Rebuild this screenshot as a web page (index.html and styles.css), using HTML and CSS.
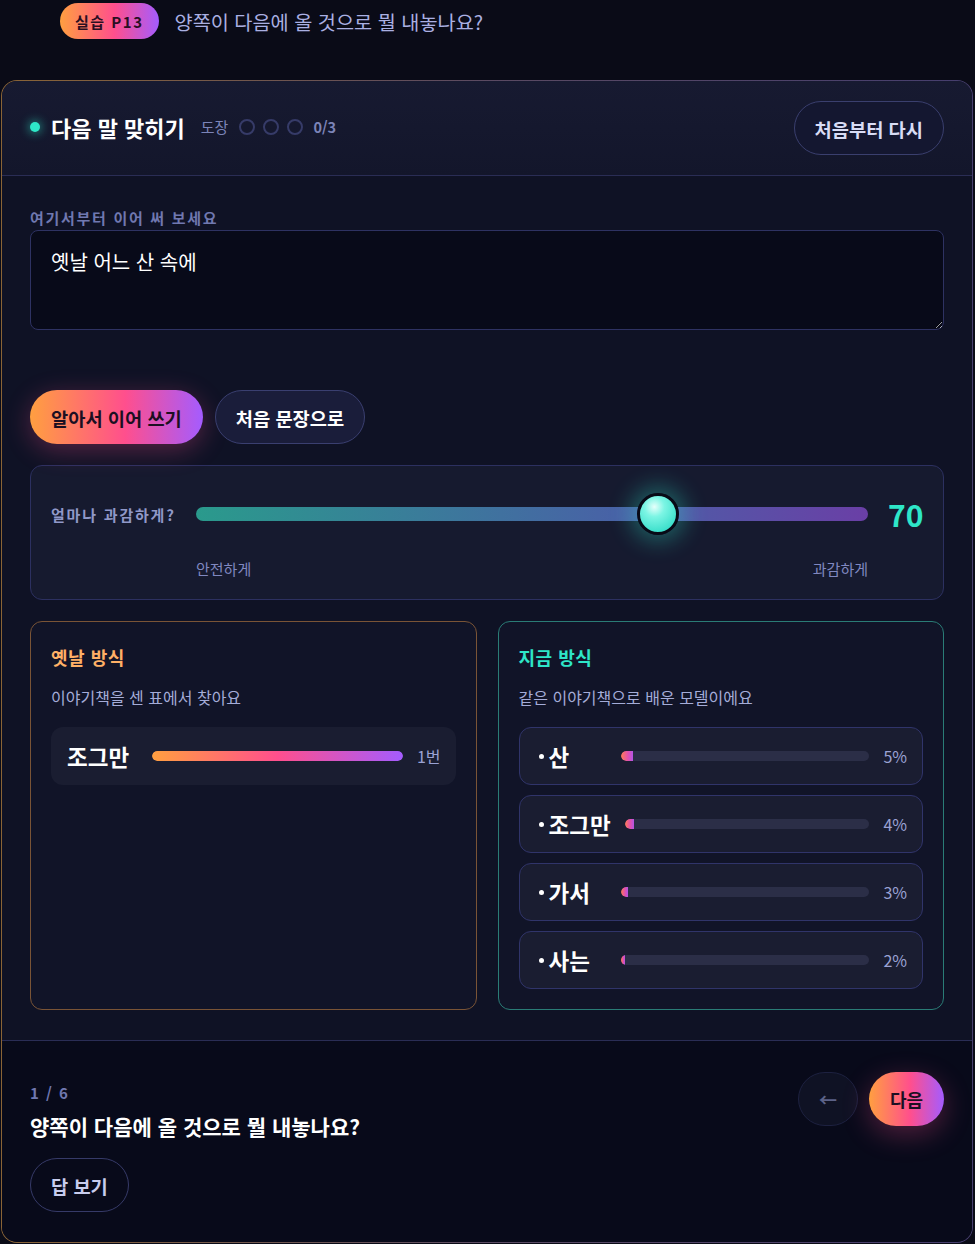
FILE: index.html
```html
<!DOCTYPE html>
<html lang="ko">
<head>
    <meta charset="UTF-8">
    <meta name="viewport" content="width=device-width, initial-scale=1.0">
    <title>다음 말 맞히기</title>
    <link rel="stylesheet" href="styles.css">
</head>
<body>
    <div class="topbar">
        <span class="tag">실습 P13</span>
        <span class="topbar-title">양쪽이 다음에 올 것으로 뭘 내놓나요?</span>
    </div>

    <div class="card">
        <div class="card-header">
            <div class="title-group">
                <span class="live-dot"></span>
                <h1>다음 말 맞히기</h1>
                <span class="stamp-label">도장</span>
                <span class="stamps"><i></i><i></i><i></i></span>
                <span class="stamp-count">0/3</span>
            </div>
            <button class="btn btn-outline">처음부터 다시</button>
        </div>

        <div class="card-body">
            <label class="field-label" for="prompt">여기서부터 이어 써 보세요</label>
            <textarea id="prompt" class="prompt">옛날 어느 산 속에</textarea>

            <div class="actions">
                <button class="btn btn-grad">알아서 이어 쓰기</button>
                <button class="btn btn-dark">처음 문장으로</button>
            </div>

            <div class="slider-box">
                <span class="slider-label">얼마나 과감하게?</span>
                <input type="range" class="slider" min="0" max="100" value="70">
                <span class="slider-value">70</span>
                <div class="slider-ticks">
                    <span>안전하게</span>
                    <span>과감하게</span>
                </div>
            </div>

            <div class="compare">
                <section class="panel panel-old">
                    <h2>옛날 방식</h2>
                    <p class="panel-sub">이야기책을 센 표에서 찾아요</p>
                    <div class="rows">
                        <div class="bar-row">
                            <span class="word">조그만</span>
                            <div class="track"><div class="fill" style="width: 100%"></div></div>
                            <span class="pct">1번</span>
                        </div>
                    </div>
                </section>

                <section class="panel panel-new">
                    <h2>지금 방식</h2>
                    <p class="panel-sub">같은 이야기책으로 배운 모델이에요</p>
                    <div class="rows">
                        <div class="bar-row">
                            <span class="word">산</span>
                            <div class="track"><div class="fill" style="width: 5%"></div></div>
                            <span class="pct">5%</span>
                        </div>
                        <div class="bar-row">
                            <span class="word">조그만</span>
                            <div class="track"><div class="fill" style="width: 4%"></div></div>
                            <span class="pct">4%</span>
                        </div>
                        <div class="bar-row">
                            <span class="word">가서</span>
                            <div class="track"><div class="fill" style="width: 3%"></div></div>
                            <span class="pct">3%</span>
                        </div>
                        <div class="bar-row">
                            <span class="word">사는</span>
                            <div class="track"><div class="fill" style="width: 2%"></div></div>
                            <span class="pct">2%</span>
                        </div>
                    </div>
                </section>
            </div>
        </div>

        <div class="card-footer">
            <div class="question">
                <div class="counter">1 / 6</div>
                <div class="question-text">양쪽이 다음에 올 것으로 뭘 내놓나요?</div>
                <button class="btn btn-ghost">답 보기</button>
            </div>
            <div class="nav">
                <button class="btn btn-prev" disabled>&larr;</button>
                <button class="btn btn-next">다음</button>
            </div>
        </div>
    </div>
</body>
</html>
```

FILE: styles.css
```css
body {
    margin: 0;
    background-color: #0a0b17;
    color: #fff;
    font-family: "Noto Sans CJK KR", "Noto Sans", sans-serif;
}

button {
    font-family: inherit;
    cursor: pointer;
}

/* top strip */
.topbar {
    display: flex;
    align-items: center;
    gap: 16px;
    padding: 3px 60px 0;
    margin-bottom: 41px;
}

.tag {
    display: inline-flex;
    align-items: center;
    height: 36px;
    padding: 0 15px;
    border-radius: 18px;
    background: linear-gradient(90deg, #ff9f40, #ff4f8d 55%, #a45cff);
    color: #2a0f22;
    font-size: 15px;
    font-weight: 700;
    letter-spacing: 1.5px;
}

.topbar-title {
    font-size: 19.7px;
    color: #aab0e2;
}

/* main card */
.card {
    margin: 0 2px 0 1px;
    border: 1px solid transparent;
    border-radius: 16px;
    overflow: hidden;
    background:
        linear-gradient(#0f1225, #0f1225) padding-box,
        linear-gradient(90deg, #8a6436, #5a4a62 50%, #463e6e) border-box;
}

.card-header {
    display: flex;
    align-items: center;
    justify-content: space-between;
    padding: 20px 28px;
    background: linear-gradient(180deg, #171a31, #13162b);
    border-bottom: 1px solid #2a2d55;
}

.title-group {
    display: flex;
    align-items: center;
    gap: 10px;
    padding-bottom: 3px;
}

.live-dot {
    width: 10px;
    height: 10px;
    border-radius: 50%;
    background: #2ee8c8;
    box-shadow: 0 0 10px 2px rgba(46, 232, 200, 0.45);
    margin-right: 1px;
}

h1 {
    margin: 0 6px 0 0;
    font-size: 22px;
    font-weight: 700;
}

.stamp-label {
    font-size: 15px;
    color: #7c84b8;
    margin-right: 1px;
}

.stamps {
    display: flex;
    gap: 8px;
}

.stamps i {
    width: 12px;
    height: 12px;
    border: 2px solid #363b68;
    border-radius: 50%;
}

.stamp-count {
    font-size: 14.5px;
    font-weight: 700;
    color: #7c84b8;
}

.btn {
    height: 54px;
    border-radius: 27px;
    font-size: 18.7px;
    font-weight: 700;
    padding: 0 20px;
}

.btn-outline {
    background: #141730;
    border: 1px solid #3a3f6e;
    color: #d8dcf5;
}

/* body */
.card-body {
    padding: 32px 28px 30px;
}

.field-label {
    display: block;
    font-size: 15px;
    font-weight: 700;
    letter-spacing: 1.7px;
    line-height: 20px;
    color: #7078b0;
    margin-bottom: 2px;
}

.prompt {
    display: block;
    width: 100%;
    height: 100px;
    box-sizing: border-box;
    padding: 16px 20px;
    background: #080a19;
    border: 1px solid #2e3262;
    border-radius: 8px;
    color: #fff;
    font-family: inherit;
    font-size: 20px;
    line-height: 30px;
}

.actions {
    display: flex;
    gap: 12px;
    margin: 60px 0 21px;
}

.btn-grad {
    border: none;
    padding: 0 21px;
    background: linear-gradient(90deg, #ff9f40, #ff4f8d 55%, #a45cff);
    color: #1c0f22;
    box-shadow: 0 6px 26px rgba(255, 79, 141, 0.3);
}

.btn-dark {
    background: #1a1d3a;
    border: 1px solid #3a3f70;
    color: #fff;
}

/* slider */
.slider-box {
    display: grid;
    grid-template-columns: 125px 1fr 35px;
    column-gap: 20px;
    row-gap: 17px;
    align-items: center;
    padding: 20px;
    background: #161a2f;
    border: 1px solid #2c3060;
    border-radius: 12px;
}

.slider-label {
    font-size: 15px;
    font-weight: 700;
    letter-spacing: 1.8px;
    color: #9098c8;
    white-space: nowrap;
}

.slider {
    -webkit-appearance: none;
    appearance: none;
    width: 100%;
    height: 56px;
    margin: 0;
    background: transparent;
}

.slider::-webkit-slider-runnable-track {
    height: 14px;
    border-radius: 7px;
    background: linear-gradient(90deg, #2a9a8c, #4862a6 62%, #6a3fa6);
}

.slider::-webkit-slider-thumb {
    -webkit-appearance: none;
    box-sizing: border-box;
    width: 42px;
    height: 42px;
    margin-top: -14px;
    border-radius: 50%;
    border: 3px solid #080a16;
    background: radial-gradient(circle at 40% 30%, #e6fffb 0%, #7cf5e4 30%, #3ee0cc 75%, #2cc8b6 100%);
    box-shadow: 0 0 22px 7px rgba(46, 232, 200, 0.32);
}

.slider-value {
    font-size: 30px;
    font-weight: 700;
    color: #2ee6c8;
    text-align: right;
}

.slider-ticks {
    grid-column: 2;
    display: flex;
    justify-content: space-between;
    font-size: 15px;
    line-height: 20px;
    color: #8088c0;
}

/* comparison */
.compare {
    display: grid;
    grid-template-columns: 1fr 1fr;
    gap: 21px;
    margin-top: 21px;
}

.panel {
    padding: 23px 20px 20px;
    background: #111428;
    border: 1px solid #2c3060;
    border-radius: 12px;
}

.panel-old {
    border-color: #7a5436;
}

.panel-new {
    border-color: #2a7c76;
}

.panel h2 {
    margin: 0;
    font-size: 18px;
    line-height: 24px;
    letter-spacing: 0.5px;
    font-weight: 700;
}

.panel-old h2 {
    color: #ffb066;
}

.panel-new h2 {
    color: #2ee6c8;
}

.panel-sub {
    margin: 17px 0 19px;
    font-size: 16px;
    line-height: 22px;
    color: #a4acd8;
}

.rows {
    display: flex;
    flex-direction: column;
    gap: 10px;
}

.bar-row {
    display: flex;
    align-items: center;
    gap: 14px;
    height: 58px;
    box-sizing: border-box;
    padding: 0 15px 0 16px;
    border-radius: 12px;
    background: #1a1d31;
}

.panel-new .bar-row {
    border: 1px solid #30346a;
    padding-left: 19px;
}

.word {
    display: flex;
    align-items: center;
    min-width: 71px;
    font-size: 22.5px;
    font-weight: 700;
    color: #fff;
}

.panel-new .word {
    min-width: 68px;
}

.panel-new .word::before {
    content: "";
    width: 5px;
    height: 5px;
    border-radius: 50%;
    background: #fff;
    margin-right: 5px;
}

.track {
    flex: 1;
    height: 10px;
    border-radius: 5px;
    background: #2b2e47;
    overflow: hidden;
}

.fill {
    height: 100%;
    border-radius: 5px 0 0 5px;
    background: linear-gradient(90deg, #ff9f40, #ff4f8d 50%, #a45cff);
}

.panel-old .fill {
    border-radius: 5px;
}

.panel-new .fill {
    background: linear-gradient(90deg, #ff7a55, #e050b0 60%, #b456e6);
}

.pct {
    font-size: 16px;
    color: #9aa2d4;
}

/* footer */
.card-footer {
    display: flex;
    justify-content: space-between;
    align-items: flex-start;
    padding: 31px 28px 30px;
    background: #080a1a;
    border-top: 1px solid #2a2d55;
}

.counter {
    margin-top: 11px;
    font-size: 15px;
    font-weight: 700;
    letter-spacing: 1.5px;
    line-height: 20px;
    color: #7078b0;
}

.question-text {
    margin: 9px 0 18px;
    font-size: 21px;
    font-weight: 700;
    line-height: 28px;
}

.btn-ghost {
    background: transparent;
    border: 1px solid #363a68;
    color: #c8cdee;
}

.nav {
    display: flex;
    gap: 11px;
}

.btn-prev {
    width: 60px;
    padding: 0;
    background: #0f1224;
    border: 1px solid #1d2140;
    color: #5c6288;
    font-size: 18px;
    cursor: default;
}

.btn-next {
    padding: 0 21px;
    border: none;
    background: linear-gradient(90deg, #ff9f40, #ff4f8d 55%, #a45cff);
    color: #1c0f22;
    font-size: 18px;
    box-shadow: 0 8px 28px rgba(255, 79, 141, 0.3);
}
```
